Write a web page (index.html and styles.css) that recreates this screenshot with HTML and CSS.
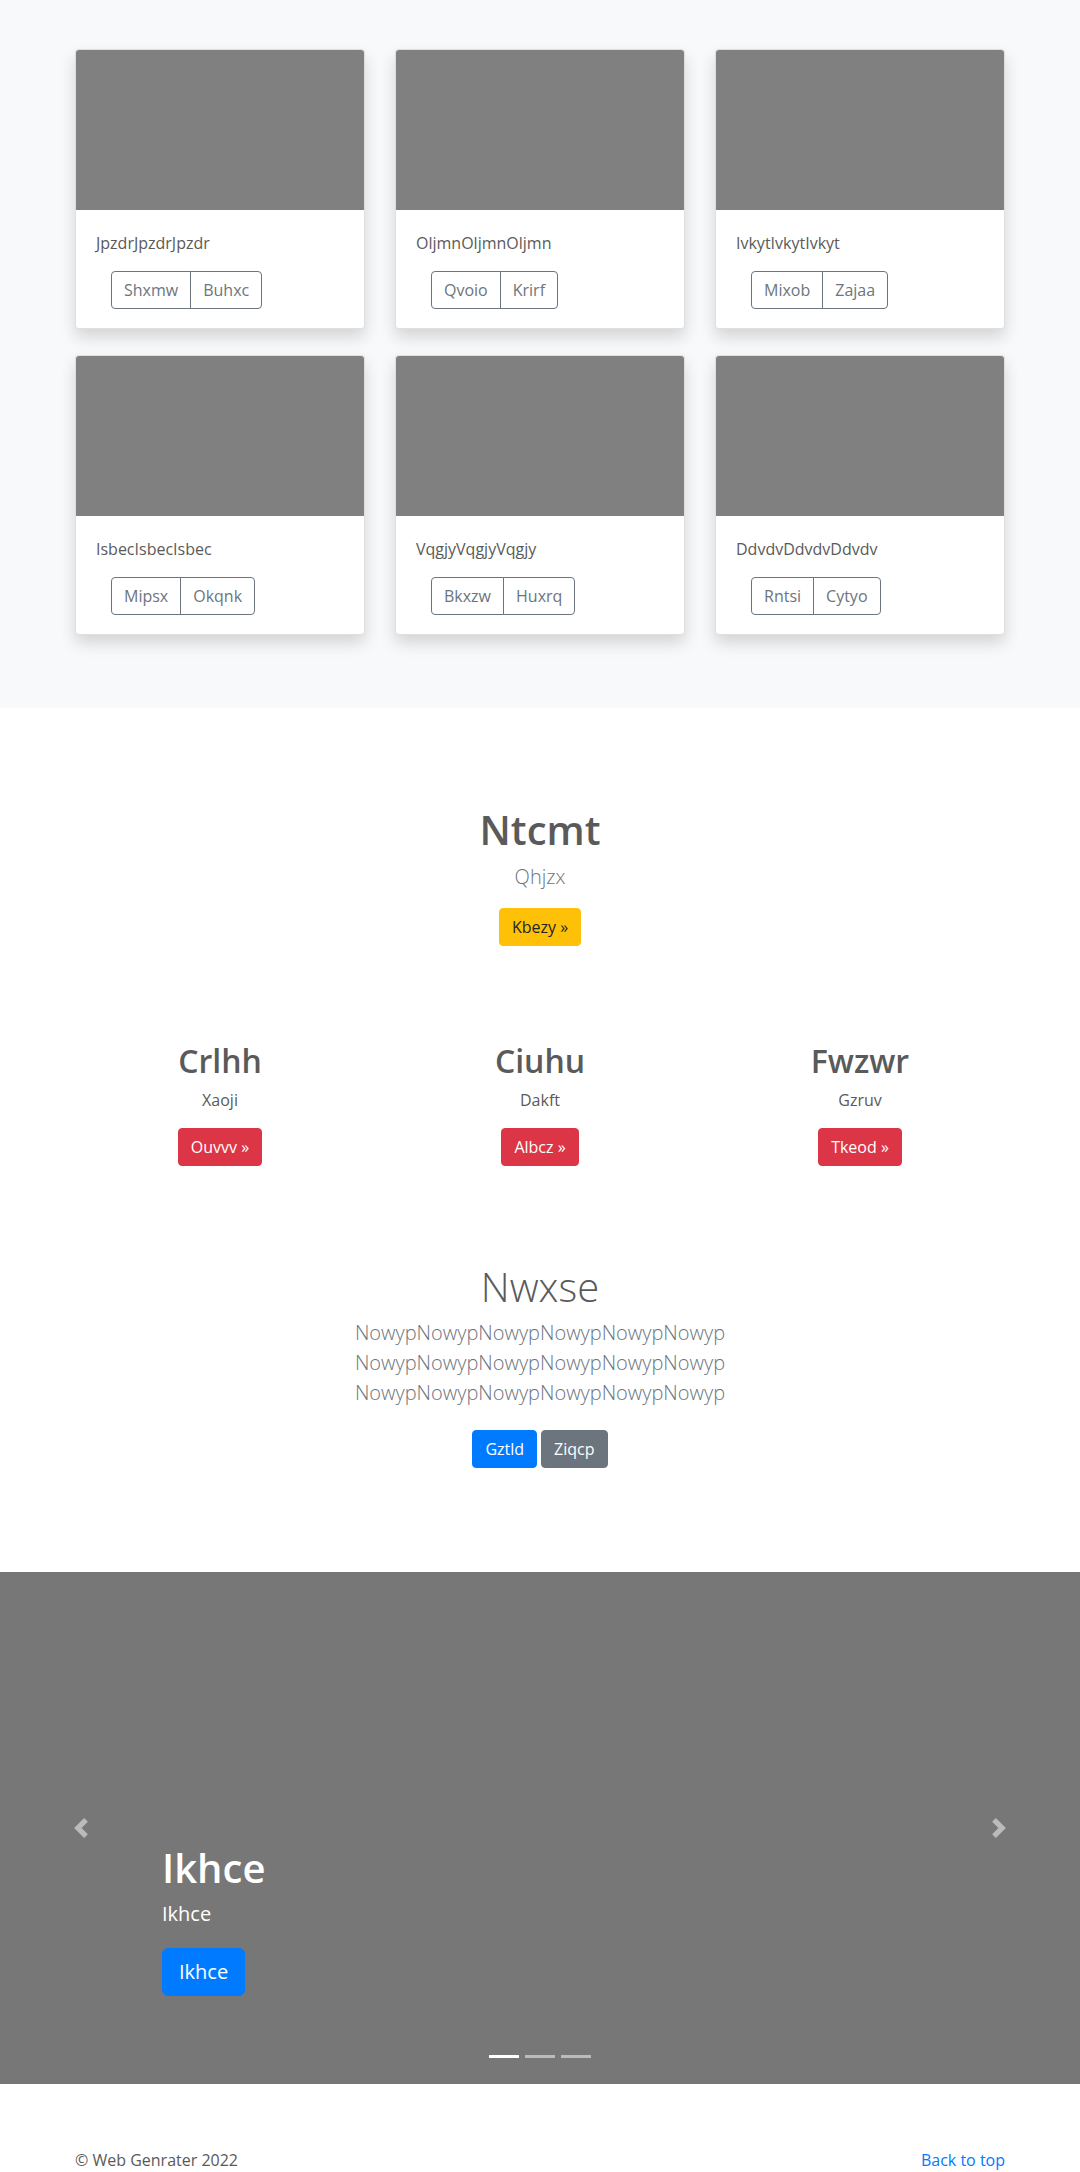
FILE: index.html
```html
<!DOCTYPE html>
<html lang="en">
<head>
<meta charset="utf-8">
<title>Album</title>
<link rel="stylesheet" href="styles.css">
</head>
<body>
<main>
  <section class="album">
    <div class="container">
      <div class="card-grid">
        <div class="card">
          <div class="card-img"></div>
          <div class="card-body">
            <p class="card-text">JpzdrJpzdrJpzdr</p>
            <div class="btn-group"><button class="btn btn-outline">Shxmw</button><button class="btn btn-outline">Buhxc</button></div>
          </div>
        </div>
        <div class="card">
          <div class="card-img"></div>
          <div class="card-body">
            <p class="card-text">OljmnOljmnOljmn</p>
            <div class="btn-group"><button class="btn btn-outline">Qvoio</button><button class="btn btn-outline">Krirf</button></div>
          </div>
        </div>
        <div class="card">
          <div class="card-img"></div>
          <div class="card-body">
            <p class="card-text">IvkytIvkytIvkyt</p>
            <div class="btn-group"><button class="btn btn-outline">Mixob</button><button class="btn btn-outline">Zajaa</button></div>
          </div>
        </div>
        <div class="card">
          <div class="card-img"></div>
          <div class="card-body">
            <p class="card-text">IsbecIsbecIsbec</p>
            <div class="btn-group"><button class="btn btn-outline">Mipsx</button><button class="btn btn-outline">Okqnk</button></div>
          </div>
        </div>
        <div class="card">
          <div class="card-img"></div>
          <div class="card-body">
            <p class="card-text">VqgjyVqgjyVqgjy</p>
            <div class="btn-group"><button class="btn btn-outline">Bkxzw</button><button class="btn btn-outline">Huxrq</button></div>
          </div>
        </div>
        <div class="card">
          <div class="card-img"></div>
          <div class="card-body">
            <p class="card-text">DdvdvDdvdvDdvdv</p>
            <div class="btn-group"><button class="btn btn-outline">Rntsi</button><button class="btn btn-outline">Cytyo</button></div>
          </div>
        </div>
      </div>
    </div>
  </section>

  <section class="content">
    <div class="container">
      <div class="intro">
        <h1 class="intro-title">Ntcmt</h1>
        <p class="lead">Qhjzx</p>
        <a class="btn btn-warning" href="#">Kbezy &raquo;</a>
      </div>

      <div class="marketing">
        <div class="feature">
          <h2 class="feature-title">Crlhh</h2>
          <p class="feature-text">Xaoji</p>
          <a class="btn btn-danger" href="#">Ouvvv &raquo;</a>
        </div>
        <div class="feature">
          <h2 class="feature-title">Ciuhu</h2>
          <p class="feature-text">Dakft</p>
          <a class="btn btn-danger" href="#">Albcz &raquo;</a>
        </div>
        <div class="feature">
          <h2 class="feature-title">Fwzwr</h2>
          <p class="feature-text">Gzruv</p>
          <a class="btn btn-danger" href="#">Tkeod &raquo;</a>
        </div>
      </div>

      <div class="jumbo">
        <h1 class="jumbo-title">Nwxse</h1>
        <p class="lead">NowypNowypNowypNowypNowypNowyp NowypNowypNowypNowypNowypNowyp NowypNowypNowypNowypNowypNowyp</p>
        <div class="jumbo-actions">
          <a class="btn btn-primary" href="#">Gztld</a>
          <a class="btn btn-secondary" href="#">Ziqcp</a>
        </div>
      </div>
    </div>
  </section>

  <section class="carousel">
    <a class="carousel-control prev" href="#">
      <svg width="20" height="20" viewBox="0 0 8 8" fill="#fff"><path d="M5.25 0l-4 4 4 4 1.5-1.5L4.25 4l2.5-2.5L5.25 0z"/></svg>
    </a>
    <div class="carousel-caption">
      <h1 class="caption-title">Ikhce</h1>
      <p class="caption-text">Ikhce</p>
      <div class="caption-actions"><a class="btn btn-lg btn-primary" href="#">Ikhce</a></div>
    </div>
    <a class="carousel-control next" href="#">
      <svg width="20" height="20" viewBox="0 0 8 8" fill="#fff"><path d="M2.75 0l-1.5 1.5L3.75 4l-2.5 2.5L2.75 8l4-4-4-4z"/></svg>
    </a>
    <ol class="carousel-indicators">
      <li class="active"></li>
      <li></li>
      <li></li>
    </ol>
  </section>

  <footer class="footer container">
    <p>&copy; Web Genrater 2022</p>
    <p><a class="top-link" href="#">Back to top</a></p>
  </footer>
</main>
</body>
</html>
```

FILE: styles.css
```css
* {
  box-sizing: border-box;
}

body {
  margin: 0;
  font-family: "Open Sans", "Noto Sans", sans-serif;
  font-size: 16px;
  line-height: 1.5;
  color: #5a5a5a;
  background: #fff;
}

p {
  margin: 0;
}

h1, h2 {
  margin: 0;
}

a {
  text-decoration: none;
}

.container {
  width: 960px;
  margin: 0 auto;
  padding: 0 15px;
}

/* Album */
.album {
  background: #f8f9fa;
  padding: 49px 0 73px;
}

.card-grid {
  display: grid;
  grid-template-columns: repeat(3, 1fr);
  column-gap: 30px;
  row-gap: 26px;
}

.card {
  background: #fff;
  border: 1px solid rgba(0, 0, 0, 0.125);
  border-radius: 4px;
  overflow: hidden;
  box-shadow: 0 8px 16px rgba(0, 0, 0, 0.15);
}

.card-img {
  height: 160px;
  background: #808080;
}

.card-body {
  padding: 21px 20px 19px;
}

.card-text {
  margin-bottom: 16px;
}

.btn {
  display: inline-block;
  font-family: inherit;
  font-size: 16px;
  line-height: 24px;
  padding: 6px 12px;
  border: 1px solid transparent;
  border-radius: 4px;
  text-align: center;
  cursor: pointer;
}

.btn-group {
  display: inline-flex;
  margin-left: 15px;
}

.btn-outline {
  background: transparent;
  color: #6c757d;
  border-color: #6c757d;
}

.btn-group .btn-outline:first-child {
  border-top-right-radius: 0;
  border-bottom-right-radius: 0;
}

.btn-group .btn-outline + .btn-outline {
  margin-left: -1px;
  border-top-left-radius: 0;
  border-bottom-left-radius: 0;
}

.btn-warning {
  background: #ffc107;
  border-color: #ffc107;
  color: #212529;
}

.btn-danger {
  background: #dc3545;
  border-color: #dc3545;
  color: #fff;
}

.btn-primary {
  background: #007bff;
  border-color: #007bff;
  color: #fff;
}

.btn-secondary {
  background: #6c757d;
  border-color: #6c757d;
  color: #fff;
}

.btn-lg {
  font-size: 20px;
  line-height: 30px;
  padding: 8px 16px;
  border-radius: 6px;
}

/* Content */
.content {
  padding: 98px 0 96px;
}

.intro {
  display: flex;
  flex-direction: column;
  align-items: center;
  text-align: center;
}

.intro-title {
  font-size: 40px;
  line-height: 48px;
  font-weight: 600;
  margin-bottom: 8px;
}

.lead {
  font-size: 20px;
  line-height: 30px;
  font-weight: 300;
  color: #6c757d;
  margin-bottom: 16px;
}

.marketing {
  display: grid;
  grid-template-columns: repeat(3, 1fr);
  margin: 96px -15px 0;
}

.feature {
  display: flex;
  flex-direction: column;
  align-items: center;
  text-align: center;
  padding: 0 15px;
}

.feature-title {
  font-size: 32px;
  line-height: 38px;
  font-weight: 600;
  margin-bottom: 8px;
}

.feature-text {
  margin-bottom: 16px;
}

.jumbo {
  width: 480px;
  margin: 97px auto 0;
  padding: 0 15px;
  display: flex;
  flex-direction: column;
  align-items: center;
  text-align: center;
}

.jumbo-title {
  font-size: 40px;
  line-height: 48px;
  font-weight: 300;
  margin-bottom: 7px;
}

.jumbo-actions {
  display: flex;
  gap: 4px;
  margin: 6px 0 8px;
}

/* Carousel */
.carousel {
  position: relative;
  height: 512px;
  background: #777;
  display: flex;
  justify-content: space-between;
  margin-bottom: 64px;
}

.carousel-control {
  width: 15%;
  display: flex;
  align-items: center;
  justify-content: center;
  opacity: 0.5;
}

.carousel-control svg {
  display: block;
}

.carousel-caption {
  position: absolute;
  left: 15%;
  right: 15%;
  bottom: 48px;
  padding: 20px 0;
  color: #fff;
  text-align: left;
}

.caption-title {
  font-size: 40px;
  line-height: 48px;
  font-weight: 600;
  margin-bottom: 8px;
}

.caption-text {
  font-size: 20px;
  line-height: 28px;
  margin-bottom: 20px;
}

.caption-actions {
  display: flex;
  margin-bottom: 20px;
}

.carousel-indicators {
  position: absolute;
  left: 0;
  right: 0;
  bottom: 0;
  margin: 0 15% 16px;
  padding: 0;
  list-style: none;
  display: flex;
  justify-content: center;
}

.carousel-indicators li {
  width: 30px;
  height: 3px;
  margin: 0 3px;
  box-sizing: content-box;
  background: #fff;
  background-clip: padding-box;
  border-top: 10px solid transparent;
  border-bottom: 10px solid transparent;
  opacity: 0.5;
}

.carousel-indicators li.active {
  opacity: 1;
}

/* Footer */
.footer {
  display: flex;
  justify-content: space-between;
  padding-bottom: 24px;
}

.footer p {
  margin-bottom: 16px;
}

.top-link {
  color: #007bff;
}
```
